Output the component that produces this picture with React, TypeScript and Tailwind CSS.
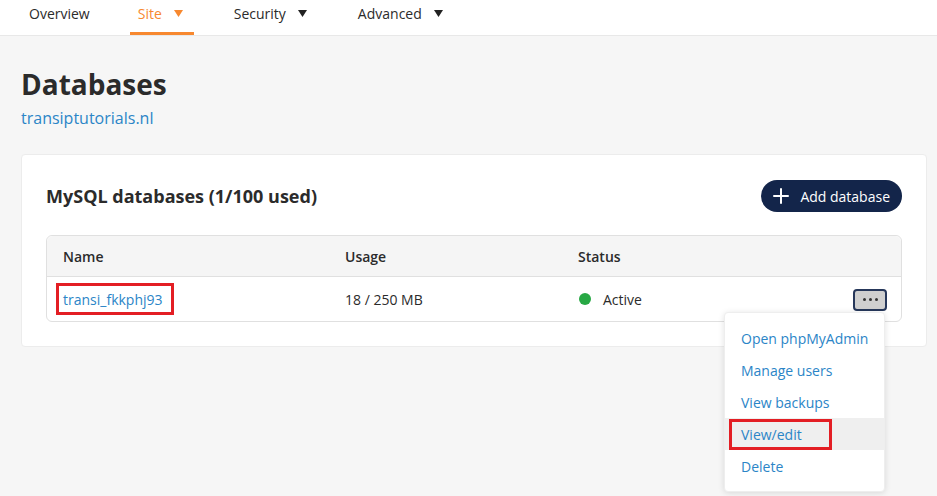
import { Plus } from "lucide-react"

const tabs = [
    { label: 'Overview', caret: false, active: false },
    { label: 'Site', caret: true, active: true },
    { label: 'Security', caret: true, active: false },
    { label: 'Advanced', caret: true, active: false },
]

const menuItems = ['Open phpMyAdmin', 'Manage users', 'View backups', 'View/edit', 'Delete']

function Caret({ color }: { color: string }) {
    return (
        <svg width="9" height="7" viewBox="0 0 9 7" className="ml-[12px]">
            <path d="M0 0 H9 L4.5 7 Z" fill={color} />
        </svg>
    )
}

export default function App() {
    return (
        <div className="min-h-[496px] w-full bg-[#f6f6f6] text-[#2b2b2b]" style={{ fontFamily: '"Open Sans", "Noto Sans", sans-serif' }}>
            {/* top nav */}
            <div className="h-[36px] bg-white border-b border-[#e8e8e8] flex pl-[21px] gap-[32px]">
                {tabs.map((t) => (
                    <div
                        key={t.label}
                        className={`h-full flex items-center pl-[8px] text-[14px] border-b-[3px] ${t.caret ? 'pr-[11px]' : 'pr-[8px]'} ${t.active ? 'border-[#f7882f] text-[#f7882f]' : 'border-transparent'}`}
                    >
                        <span className="-mt-[6px] flex items-center">
                            {t.label}
                            {t.caret && <Caret color={t.active ? '#f7882f' : '#222'} />}
                        </span>
                    </div>
                ))}
            </div>

            <div className="px-[21px] pt-[30px]">
                <h1 className="text-[28px] font-bold leading-[36px] text-[#2b2b2b]">Databases</h1>
                <a className="block mt-[4px] text-[16px] text-[#2b85c7]">transiptutorials.nl</a>

                <div className="mt-[24px] w-[906px] bg-white rounded-[4px] border border-[#ececec] px-[24px] pt-[25px] pb-[24px]">
                    <div className="flex items-center justify-between">
                        <h2 className="text-[18px] font-bold text-[#2b2b2b]">MySQL databases (1/100 used)</h2>
                        <button className="h-[32px] rounded-full bg-[#13254a] text-white flex items-center pl-[8px] pr-[12px] text-[14px]">
                            <Plus size={24} strokeWidth={2} className="mr-[7px]" />
                            Add database
                        </button>
                    </div>

                    <div className="mt-[23px] border border-[#e0e0e0] rounded-[6px]">
                        <div className="h-[41px] bg-[#f5f5f5] rounded-t-[6px] border-b border-[#e0e0e0] flex items-center pl-[16px] text-[14px] font-semibold">
                            <div className="w-[282px]">Name</div>
                            <div className="w-[233px]">Usage</div>
                            <div>Status</div>
                        </div>
                        <div className="h-[44px] flex items-center pl-[9px] pr-[14px] text-[14px] relative">
                            <div className="w-[289px]">
                                <span className="inline-flex items-center h-[32px] border-[3px] border-[#e31e24] pl-[4px] pr-[8px] text-[#2b85c7]">transi_fkkphj93</span>
                            </div>
                            <div className="w-[233px]">18 / 250 MB</div>
                            <div className="flex items-center flex-1">
                                <span className="w-[12px] h-[12px] rounded-full bg-[#27a844] ml-[1px] mr-[12px]" />
                                Active
                            </div>
                            <button className="w-[34px] h-[22px] rounded-[4px] bg-[#cfcfcf] border-2 border-[#26375a] flex items-center justify-center gap-[3px] mt-[1px]">
                                <span className="w-[3px] h-[3px] rounded-full bg-[#333]" />
                                <span className="w-[3px] h-[3px] rounded-full bg-[#333]" />
                                <span className="w-[3px] h-[3px] rounded-full bg-[#333]" />
                            </button>

                            {/* dropdown menu */}
                            <div className="absolute left-[677px] top-[35px] w-[161px] bg-white rounded-[4px] border border-[#eeeeee] shadow-[0_1px_6px_rgba(0,0,0,0.12)] py-[9px] z-10">
                                {menuItems.map((m) => (
                                    <div
                                        key={m}
                                        className={`h-[32px] flex items-center text-[14px] text-[#2b85c7] ${m === 'View/edit' ? 'bg-[#efefef] pl-[4px]' : 'pl-[16px]'}`}
                                    >
                                        {m === 'View/edit' ? (
                                            <span className="h-[31px] w-[103px] flex items-center border-[3px] border-[#e31e24] pl-[9px]">{m}</span>
                                        ) : (
                                            m
                                        )}
                                    </div>
                                ))}
                            </div>
                        </div>
                    </div>
                </div>
            </div>
        </div>
    )
}
